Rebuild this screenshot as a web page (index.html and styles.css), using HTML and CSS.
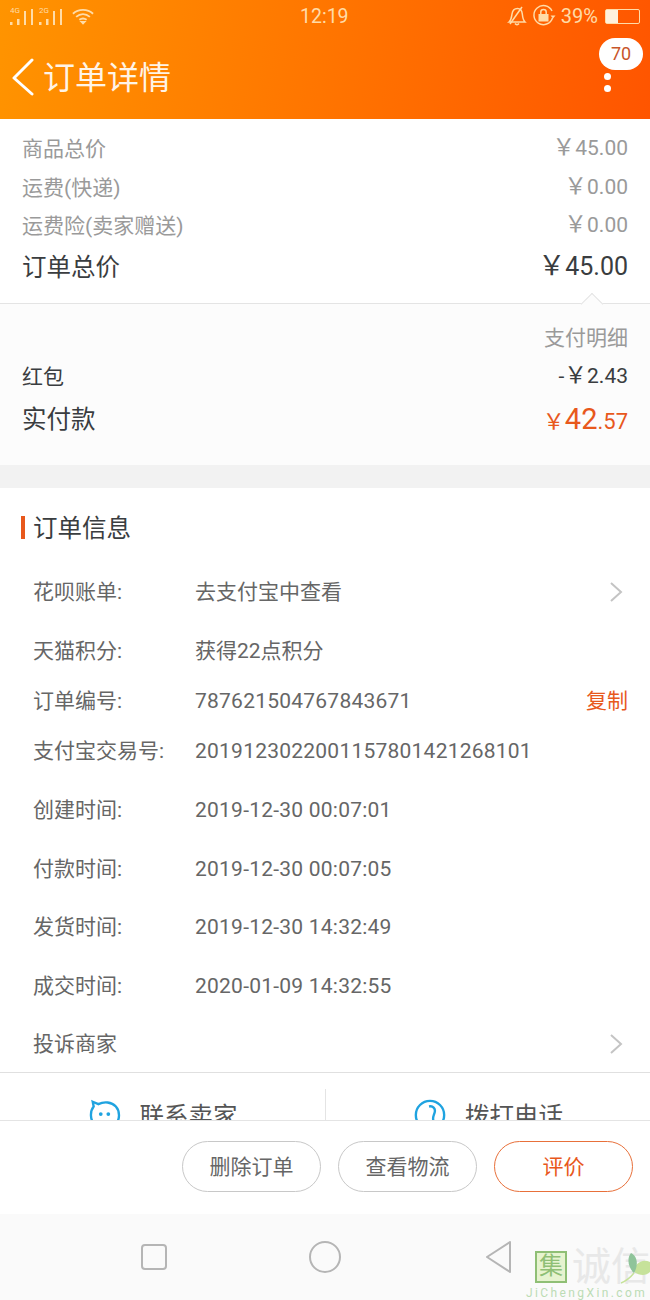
FILE: index.html
```html
<!DOCTYPE html>
<html lang="zh-CN">
<head>
    <meta charset="UTF-8">
    <meta name="viewport" content="width=device-width, initial-scale=1.0">
    <title>订单详情</title>
    <link rel="stylesheet" href="styles.css">
</head>
<body>
<div class="screen">
    <header class="top">
        <div class="status">
            <div class="status-left">
                <svg class="signal" width="26" height="20" viewBox="0 0 26 20">
                    <text x="0" y="7" class="net">4G</text>
                    <rect x="0" y="16" width="2.5" height="3"/><rect x="7" y="13" width="2.5" height="6"/><rect x="14" y="5" width="2" height="14"/><rect x="21" y="3" width="2" height="16"/>
                </svg>
                <svg class="signal" width="26" height="20" viewBox="0 0 26 20">
                    <text x="0" y="7" class="net">2G</text>
                    <rect x="0" y="16" width="2.5" height="3"/><rect x="7" y="13" width="2.5" height="6"/><rect x="14" y="5" width="2" height="14"/><rect x="21" y="3" width="2" height="16"/>
                </svg>
                <svg class="wifi" width="22" height="18" viewBox="0 0 24 18" fill="none" stroke="#ffdca8" stroke-width="2">
                    <path d="M1 6.5C7 1 17 1 23 6.5"/>
                    <path d="M4.5 10C9 6 15 6 19.5 10"/>
                    <path d="M8 13.2C10.5 11.3 13.5 11.3 16 13.2"/>
                    <path d="M10.5 15.5L12 17L13.5 15.5Z" fill="#ffdca8"/>
                </svg>
            </div>
            <span class="clock">12:19</span>
            <div class="status-right">
                <svg width="20" height="20" viewBox="0 0 20 20" fill="none" stroke="#ffdca8" stroke-width="1.5">
                    <path d="M2 16C4.5 14 4.5 11 5 8C5.5 4.5 8 2.5 10.5 2.5C13.5 2.5 15 5 15.3 8C15.6 11 16 14 18 16Z"/>
                    <path d="M3 18L15 1"/>
                    <path d="M8 17.5C9 19 11 19 12 17.5"/>
                </svg>
                <svg width="24" height="24" viewBox="0 0 24 24" fill="none" stroke="#ffdca8" stroke-width="1.5">
                    <path d="M20.5 14A9.5 9.5 0 1 1 20 7"/>
                    <path d="M18.5 11.5L23.5 11.5L21 14.5Z" fill="#ffdca8" stroke="none"/>
                    <rect x="6.5" y="10" width="10" height="7.5" fill="#ffdca8" stroke="none"/>
                    <path d="M8.8 10V8C8.8 4.8 14.2 4.8 14.2 8V10"/>
                </svg>
                <span class="percent">39%</span>
                <div class="battery"><div class="battery-fill"></div></div>
            </div>
        </div>
        <div class="titlebar">
            <svg class="back" width="24" height="40" viewBox="0 0 24 40" fill="none" stroke="#fff" stroke-width="3" stroke-linecap="round" stroke-linejoin="round">
                <path d="M21 2L3 20L21 36"/>
            </svg>
            <h1>订单详情</h1>
            <div class="more">
                <span class="badge">70</span>
                <i class="dot"></i>
                <i class="dot"></i>
            </div>
        </div>
    </header>

    <section class="summary">
        <div class="row muted"><span>商品总价</span><span class="amount"><span class="yen">￥</span>45.00</span></div>
        <div class="row muted"><span>运费(快递)</span><span class="amount"><span class="yen">￥</span>0.00</span></div>
        <div class="row muted"><span>运费险(卖家赠送)</span><span class="amount"><span class="yen">￥</span>0.00</span></div>
        <div class="row total"><span>订单总价</span><span class="amount"><span class="yen">￥</span>45.00</span></div>
    </section>

    <section class="payment">
        <div class="caret"></div>
        <div class="detail-link">支付明细</div>
        <div class="row pay-line"><span>红包</span><span class="amount">-<span class="yen">￥</span>2.43</span></div>
        <div class="row paid">
            <span>实付款</span>
            <span class="paid-sum"><span class="cur">￥</span><span class="big">42</span>.57</span>
        </div>
    </section>

    <section class="info">
        <h2>订单信息</h2>
        <div class="info-row r1"><span class="key">花呗账单:</span><span class="val">去支付宝中查看</span><svg class="chev" width="14" height="22" viewBox="0 0 14 22" fill="none" stroke="#c4c4c4" stroke-width="2"><path d="M2 2L12 11L2 20"/></svg></div>
        <div class="info-row r2"><span class="key">天猫积分:</span><span class="val">获得22点积分</span></div>
        <div class="info-row r3"><span class="key">订单编号:</span><span class="val num">787621504767843671</span><span class="copy">复制</span></div>
        <div class="info-row r4"><span class="key">支付宝交易号:</span><span class="val num">2019123022001157801421268101</span></div>
        <div class="info-row r5"><span class="key">创建时间:</span><span class="val num">2019-12-30 00:07:01</span></div>
        <div class="info-row"><span class="key">付款时间:</span><span class="val num">2019-12-30 00:07:05</span></div>
        <div class="info-row"><span class="key">发货时间:</span><span class="val num">2019-12-30 14:32:49</span></div>
        <div class="info-row"><span class="key">成交时间:</span><span class="val num">2020-01-09 14:32:55</span></div>
        <div class="info-row"><span class="key">投诉商家</span><svg class="chev" width="14" height="22" viewBox="0 0 14 22" fill="none" stroke="#c4c4c4" stroke-width="2"><path d="M2 2L12 11L2 20"/></svg></div>
    </section>

    <section class="contact">
        <div class="contact-item">
            <svg width="34" height="36" viewBox="0 0 36 36" fill="none" stroke="#1fa3e0" stroke-width="2.5">
                <path d="M5 4L11 6.5C17 3.5 25 4 29.5 9C34 14 34 23 29 28C24 33 12 33 7 28C2 23 2 14 6 9Z"/>
                <circle cx="13.5" cy="17" r="2" fill="#1fa3e0" stroke="none"/>
                <circle cx="21.5" cy="17" r="2" fill="#1fa3e0" stroke="none"/>
            </svg>
            <span>联系卖家</span>
        </div>
        <div class="contact-item">
            <svg width="34" height="36" viewBox="0 0 36 36" fill="none" stroke="#1fa3e0" stroke-width="2.5">
                <circle cx="18" cy="18" r="15"/>
                <path d="M17 9C21 8 24 11 23 15C22 19 20 21 22 25C23 28 18 30 13 28"/>
            </svg>
            <span>拨打电话</span>
        </div>
    </section>

    <section class="actions">
        <button type="button" class="pill">删除订单</button>
        <button type="button" class="pill">查看物流</button>
        <button type="button" class="pill pill-main">评价</button>
    </section>

    <nav class="navbar">
        <svg width="28" height="28" viewBox="0 0 28 28" fill="none" stroke="#b5b5b5" stroke-width="2"><rect x="2" y="2" width="24" height="24" rx="3"/></svg>
        <svg width="34" height="34" viewBox="0 0 34 34" fill="none" stroke="#b5b5b5" stroke-width="2"><circle cx="17" cy="17" r="15"/></svg>
        <svg width="30" height="34" viewBox="0 0 30 34" fill="none" stroke="#b5b5b5" stroke-width="2" stroke-linejoin="round"><path d="M26 2L3 17L26 32Z"/></svg>
    </nav>

    <div class="watermark">
        <div class="mark-top">
            <span class="mark-box">集</span>
            <span class="mark-text">诚信</span>
        </div>
        <div class="mark-url">JiChengXin.com</div>
        <svg class="mark-leaf" width="30" height="32" viewBox="0 0 30 32" fill="none">
            <path d="M14 21C10 26 6 29 1 31" stroke="#c6e29a" stroke-width="1.5"/>
            <path d="M14 20C14 12 22 6 30 10V20C26 24 20 24 14 20Z" fill="#c6e29a"/>
            <path d="M11 1C17 4 19 12 14 21C9 17 6 7 11 1Z" fill="#8fc49a"/>
        </svg>
    </div>
</div>
</body>
</html>
```

FILE: styles.css
```css
* {
    box-sizing: border-box;
}

body {
    margin: 0;
    font-family: Roboto, "Noto Sans CJK SC", sans-serif;
    background: #fff;
}

.screen {
    position: relative;
    width: 650px;
    height: 1300px;
    overflow: hidden;
    display: flex;
    flex-direction: column;
}

/* header */
.top {
    height: 119px;
    flex: none;
    background: linear-gradient(100deg, #ff9400 0%, #ff7500 50%, #ff5500 100%);
    color: #fff;
}

.status {
    height: 32px;
    padding: 0 10px 0 10px;
    display: flex;
    align-items: center;
    justify-content: space-between;
    position: relative;
}

.status-left,
.status-right {
    display: flex;
    align-items: center;
    gap: 3px;
}

.status-left .wifi {
    margin-left: 4px;
}

.signal {
    fill: #ffdca8;
}

.net {
    font-size: 8px;
    font-family: Roboto, sans-serif;
}

.clock {
    position: absolute;
    left: 300px;
    top: 5px;
    font-size: 19.5px;
    line-height: 24px;
    color: #ffdca8;
}

.status-right {
    gap: 5px;
}

.percent {
    font-size: 20px;
    color: #ffdca8;
}

.battery {
    width: 35px;
    height: 15px;
    border: 1.5px solid #ffdca8;
    border-radius: 2px;
    margin-left: 2px;
}

.battery-fill {
    width: 12px;
    height: 100%;
    background: #fff1dc;
}

.titlebar {
    height: 87px;
    display: flex;
    align-items: center;
    padding: 0 0 0 11px;
}

.back {
    margin-top: 5px;
}

.titlebar h1 {
    margin: 4px 0 0 8px;
    font-size: 32px;
    font-weight: 400;
    line-height: 40px;
    color: #fff4e6;
}

.more {
    margin-left: auto;
    width: 44px;
    margin-right: 7px;
    display: flex;
    flex-direction: column;
    align-self: flex-start;
    padding-top: 6px;
}

.badge {
    width: 44px;
    height: 32px;
    border-radius: 16px;
    background: #fff;
    color: #c8552a;
    font-size: 18px;
    line-height: 32px;
    text-align: center;
}

.dot {
    width: 7px;
    height: 7px;
    border-radius: 50%;
    background: #fff;
    margin: 3px 0 2px 5px;
}

.dot + .dot {
    margin-top: 3px;
}

/* amounts */
.row {
    display: flex;
    justify-content: space-between;
    align-items: center;
    padding: 0 22px;
    line-height: 30px;
}

.amount {
    position: relative;
    top: -1px;
}

.yen {
    font-size: 1.08em;
}

.summary {
    flex: none;
    height: 185px;
    padding-top: 11px;
    background: #fff;
    border-bottom: 1px solid #e4e4e4;
}

.muted {
    height: 38.5px;
    font-size: 21px;
    color: #9a9a9a;
}

.total {
    height: 41px;
    margin-top: 2px;
    font-size: 24.5px;
    color: #3a3d40;
}

.total .amount {
    top: -2px;
    font-size: 25px;
}

.payment {
    position: relative;
    flex: none;
    height: 161px;
    background: #fcfcfc;
    padding-top: 16px;
}

.caret {
    position: absolute;
    right: 50px;
    top: -8px;
    width: 16px;
    height: 16px;
    background: #fcfcfc;
    border-left: 1px solid #e4e4e4;
    border-top: 1px solid #e4e4e4;
    transform: rotate(45deg);
}

.detail-link {
    padding: 0 22px;
    text-align: right;
    font-size: 21px;
    line-height: 36px;
    color: #9a9a9a;
}

.pay-line {
    height: 38px;
    margin-top: 2px;
    font-size: 21px;
    color: #3a3d40;
}

.paid {
    height: 46px;
    margin-top: 1px;
    font-size: 24.5px;
    color: #3a3d40;
}

.paid-sum {
    color: #e8581c;
    font-size: 22px;
}

.paid-sum .big {
    font-size: 29px;
}

/* order info */
.info {
    flex: none;
    height: 585px;
    margin-top: 23px;
    background: #fff;
    border-bottom: 1px solid #e0e0e0;
    box-shadow: 0 -23px 0 #f2f2f2;
}

.info h2 {
    margin: 28px 0 23px 21px;
    padding-left: 8px;
    height: 23px;
    line-height: 25px;
    font-size: 24.5px;
    font-weight: 400;
    color: #3a3d40;
    border-left: 4px solid #e8581c;
}

.info-row {
    height: 58.5px;
    padding: 0 22px 0 33px;
    display: flex;
    align-items: center;
    font-size: 21px;
    line-height: 30px;
    color: #666;
}

.info-row.r1 {
    height: 60px;
}

.info-row.r2 {
    height: 57px;
}

.info-row.r3 {
    height: 44px;
}

.info-row.r4 {
    height: 56px;
}

.info-row.r5 {
    margin-top: 2px;
}

.key {
    width: 162px;
    flex: none;
    white-space: nowrap;
}

.val {
    flex: 1;
    white-space: nowrap;
}

.num {
    letter-spacing: 0.23px;
}

.chev {
    margin: 0 5px 0 auto;
}

.copy {
    color: #e8581c;
}

/* contact row, cut off by the fixed bar below */
.contact {
    flex: none;
    height: 47px;
    overflow: hidden;
    display: grid;
    grid-template-columns: 1fr 1fr;
    padding-top: 16px;
    background: #fff;
}

.contact-item {
    height: 60px;
    display: flex;
    justify-content: center;
    gap: 18px;
    font-size: 24.5px;
    line-height: 36px;
    color: #555;
}

.contact-item + .contact-item {
    border-left: 1px solid #e4e4e4;
}

.contact-item svg {
    flex: none;
    margin-top: 8px;
}

.contact-item span {
    margin-top: 10px;
}

.actions {
    flex: none;
    height: 94px;
    background: #fff;
    border-top: 1px solid #e4e4e4;
    padding: 20px 17px 0 0;
    display: flex;
    justify-content: flex-end;
    gap: 17px;
    align-items: flex-start;
}

.pill {
    width: 139px;
    height: 51px;
    border-radius: 26px;
    border: 1px solid #c8c8c8;
    background: #fff;
    font-family: inherit;
    font-size: 21px;
    color: #666;
    padding: 0 0 3px;
}

.pill-main {
    border-color: #e8703a;
    color: #e8581c;
}

.navbar {
    flex: 1;
    background: #fafafa;
    display: flex;
    align-items: center;
    gap: 140px;
    padding: 0 0 0 140px;
}

.navbar svg:nth-child(3) {
    margin-left: 2px;
}

/* site watermark over the corner */
.watermark {
    position: absolute;
    right: 0;
    bottom: 0;
    width: 124px;
    height: 50px;
}

.mark-top {
    display: flex;
    align-items: center;
    gap: 5px;
    padding-left: 9px;
}

.mark-box {
    flex: none;
    width: 32px;
    height: 32px;
    border: 2px solid #8fbf75;
    background: #e6f3cf;
    color: #8fbf75;
    font-size: 24px;
    line-height: 27px;
    text-align: center;
}

.mark-text {
    font-size: 39px;
    line-height: 34px;
    color: #e8e8e8;
    white-space: nowrap;
}

.mark-url {
    font-size: 12px;
    line-height: 14px;
    letter-spacing: 2.4px;
    color: #bcdcb5;
    white-space: nowrap;
    margin-top: 2px;
}

.mark-leaf {
    position: absolute;
    right: 0;
    top: 2px;
}
```
